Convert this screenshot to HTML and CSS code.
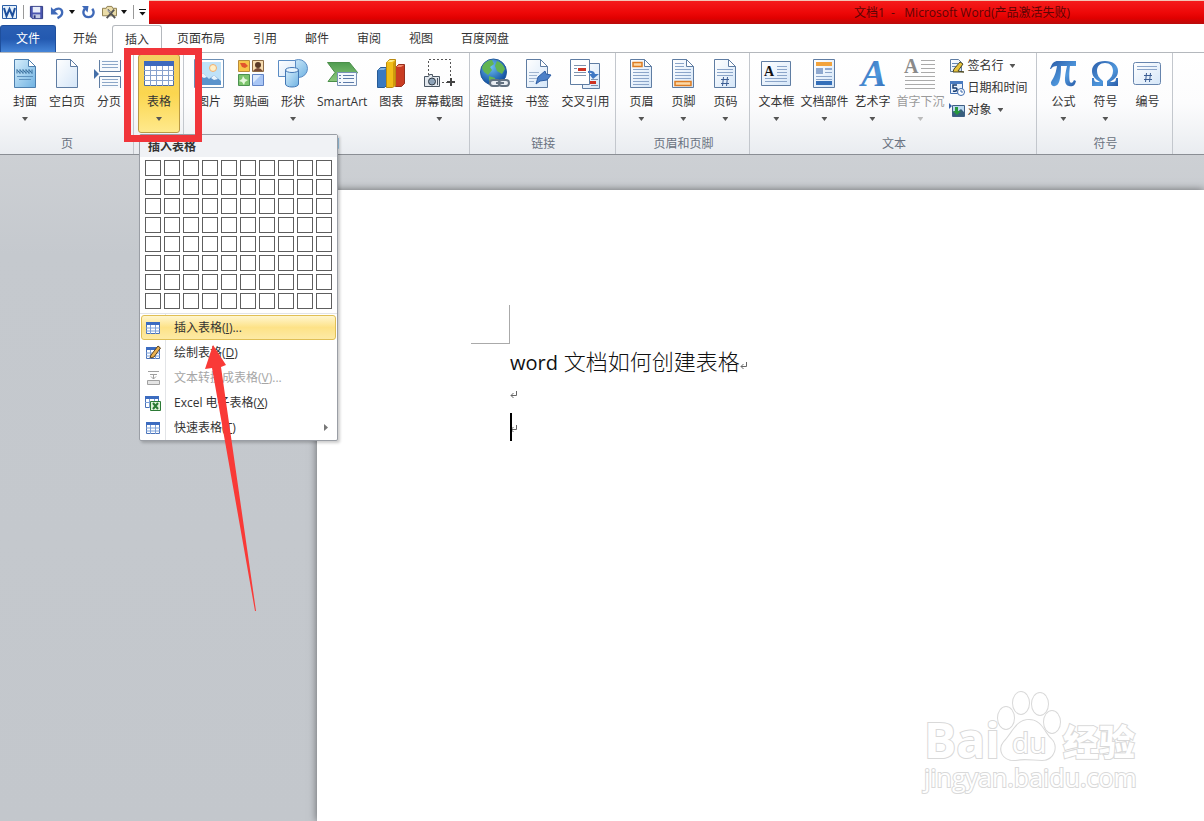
FILE: index.html
```
<!DOCTYPE html>
<html lang="zh-CN">
<head>
    <meta charset="UTF-8">
    <meta name="viewport" content="width=device-width, initial-scale=1.0">
    <title>文档1 - Microsoft Word</title>
    <link rel="stylesheet" href="styles.css">
</head>
<body>
    <svg class="defs" width="0" height="0" aria-hidden="true">
        <defs>
            <linearGradient id="paper" x1="0" y1="0" x2="1" y2="1"><stop offset="0" stop-color="#fff"/><stop offset="1" stop-color="#d5e6f8"/></linearGradient>
            <linearGradient id="sky" x1="0" y1="0" x2="1" y2="1"><stop offset="0" stop-color="#d8effc"/><stop offset="1" stop-color="#6fb2e2"/></linearGradient>
            <linearGradient id="blue" x1="0" y1="0" x2="1" y2="1"><stop offset="0" stop-color="#2a5ca8"/><stop offset="0.6" stop-color="#4f97dc"/><stop offset="1" stop-color="#2a5ca8"/></linearGradient>
            <linearGradient id="green" x1="0" y1="0" x2="0" y2="1"><stop offset="0" stop-color="#4f9c50"/><stop offset="1" stop-color="#8cc97c"/></linearGradient>
            <radialGradient id="globe" cx="0.4" cy="0.3" r="0.7"><stop offset="0" stop-color="#6fc0f4"/><stop offset="1" stop-color="#0c4a9c"/></radialGradient>
            <symbol id="table" viewBox="0 0 16 16">
                <path fill="#fff" stroke="#4a72b8" d="M1.500 2.500h13v11h-13z"/>
                <path fill="#3c6cc0" d="M1 2h14v3H1z"/>
                <path stroke="#7ba0d8" d="M1 8h14M1 11h14M5.500 5v9M10.500 5v9"/>
            </symbol>
            <symbol id="return" viewBox="0 0 8 8">
                <path fill="none" stroke="#666" d="M6.500 0v4.500H1M3.500 2L1 4.500L3.500 7"/>
            </symbol>
        </defs>
    </svg>

    <header class="titlebar">
        <div class="quick">
            <svg class="i16" viewBox="0 0 16 16"><path fill="#e6f1fb" stroke="#2d5fa6" d="M1.500 1.500h14v13h-14z"/><path fill="none" stroke="#1d4f9c" stroke-width="2" d="M3 4l2.500 8L8.500 5l3 7L14 4"/></svg>
            <i class="sep"></i>
            <button class="q" aria-label="保存"><svg class="i16" viewBox="0 0 16 16"><path fill="#4a56b0" stroke="#2c3680" d="M1.500 1.500h13v13h-11l-2-2z"/><path fill="#e8edf9" d="M4 2h8v6H4z"/><path fill="#c4cce4" d="M4 10h8v4H4z"/><path fill="#2c3680" d="M5 11h2v3H5z"/></svg></button>
            <button class="q" aria-label="撤消"><svg class="i16" viewBox="0 0 16 16"><path fill="none" stroke="#3f69b8" stroke-width="2.500" d="M4 6c5-4 9-2 9 2 0 3-3 5-5 6"/><path fill="#3f69b8" d="M1 2v8h8z"/></svg><i class="caret dark"></i></button>
            <button class="q" aria-label="重复"><svg class="i16" viewBox="0 0 16 16"><path fill="none" stroke="#3f69b8" stroke-width="2.500" d="M4 4C1 8 3 13 8 13s7-5 4-9"/><path fill="#3f69b8" d="M8 1h-7l6 7z"/></svg></button>
            <button class="q" aria-label="工具"><svg class="i16" viewBox="0 0 16 16"><path fill="#eadca8" stroke="#8b7b4c" d="M.5 3.500h4l1-2h5l1 2h4v8H.5z"/><path stroke="#555" stroke-width="2" d="M6 5l8 9M13 5L5 14"/><path stroke="#ddd" d="M5 5l4 3"/></svg><i class="caret dark"></i></button>
            <i class="sep"></i>
            <button class="q custom" aria-label="自定义快速访问工具栏"><i class="caret dark"></i></button>
        </div>
        <div class="caption">文档1&nbsp; -&nbsp;&nbsp; Microsoft Word(产品激活失败)</div>
    </header>

    <nav class="tabs">
        <button class="file">文件</button>
        <button>开始</button>
        <button class="active">插入</button>
        <button>页面布局</button>
        <button>引用</button>
        <button>邮件</button>
        <button>审阅</button>
        <button>视图</button>
        <button>百度网盘</button>
    </nav>

    <div class="ribbon">
        <section class="group">
            <div class="tools">
                <button class="tool"><svg viewBox="0 0 32 32"><path fill="url(#sky)" stroke="#4d7fae" d="M5.500 1.500h14l7 7v21h-21z"/><path fill="#fff" stroke="#4d7fae" d="M19.500 1.500v7h7z"/><path fill="none" stroke="#39709f" d="M8 15.500v-4l3 4v-4l3 4v-4l3 4v-4l3 4v-4l3 4v-4"/><path stroke="#5e93bf" d="M8 18.500h16M10 21.500h12"/></svg>封面<i class="caret"></i></button>
                <button class="tool"><svg viewBox="0 0 32 32"><path fill="url(#paper)" stroke="#5f7da3" d="M5.500 1.500h14l7 7v21h-21z"/><path fill="#fff" stroke="#5f7da3" d="M19.500 1.500v7h7z"/></svg>空白页</button>
                <button class="tool"><svg viewBox="0 0 32 32"><path fill="#f7fafd" d="M7 2h20v11H7zM7 19h20v11H7z"/><path fill="none" stroke="#5f7da3" d="M6.500 2v11.500h21V2M6.500 30V18.500h21V30"/><path stroke="#8ca7c8" d="M9 3.500h16M9 6.500h16M9 9.500h16M9 21.500h16M9 24.500h16M9 27.500h16"/><path fill="#456fa8" d="M1 11l5 5-5 5z"/></svg>分页</button>
            </div>
            <h2>页</h2>
        </section>

        <section class="group">
            <div class="tools table-tool">
                <button class="tool pressed"><svg viewBox="0 0 32 32"><path fill="#fff" stroke="#4f6ea5" d="M1.500 3.500h29v24h-29z"/><path fill="#3d69bd" d="M1 3h30v5H1z"/><path stroke="#87a1cd" d="M1 12.500h30M1 17.500h30M1 22.500h30M7.500 8v20M13.500 8v20M19.500 8v20M25.500 8v20"/></svg>表格<i class="caret"></i></button>
                <div class="menu">
                    <h3>插入表格</h3>
                    <div class="cells" id="cells"></div>
                    <div class="items">
                        <button class="hot"><svg class="i16"><use href="#table"/></svg><span>插入表格(<u>I</u>)...</span></button>
                        <button><svg class="i16" viewBox="0 0 16 16"><use href="#table"/><path fill="#e9b04e" stroke="#5b4322" d="M6 10l7-9 2.500 2L9 12l-4 1z"/></svg><span>绘制表格(<u>D</u>)</span></button>
                        <button disabled><svg class="i16" viewBox="0 0 16 16"><path fill="#e4e4e4" stroke="#a0a0a0" d="M2.500 10.500h12v4h-12z"/><path fill="none" stroke="#a0a0a0" d="M3 1.500h11M5 4.500h7M8.500 4v5M6 6.500l2.500 2.500L11 6.500"/></svg><span>文本转换成表格(<u>V</u>)...</span></button>
                        <button><svg class="i16" viewBox="0 0 16 16"><path fill="#fff" stroke="#4a72b8" d="M.5 1.500h13v11H.5z"/><path fill="#3c6cc0" d="M0 1h14v3H0z"/><path stroke="#7ba0d8" d="M0 7.500h14M4.500 4v9M9.500 4v9"/><path fill="#dff2dc" stroke="#2b7a35" d="M5.500 6.500h10v9h-10z"/><path stroke="#2b7a35" stroke-width="2" d="M8 8l5 6M13 8l-5 6"/></svg><span>Excel 电子表格(<u>X</u>)</span></button>
                        <button><svg class="i16"><use href="#table"/></svg><span>快速表格(<u>T</u>)</span><i class="more"></i></button>
                    </div>
                </div>
                <div class="mark"></div>
                <svg class="arrow" viewBox="0 0 52 266"><path fill="#f93a37" d="M9 0L1 24l7-1 43 243h1L17 22l5-2z"/></svg>
            </div>
            <h2>表格</h2>
        </section>

        <section class="group">
            <div class="tools">
                <button class="tool"><svg viewBox="0 0 32 32"><path fill="#fff" stroke="#6d8fb5" d="M1.500 1.500h29v28h-29z"/><path fill="#bfe2f8" d="M4 4h24v23H4z"/><circle cx="20" cy="10" r="3.500" fill="#fff0c8" stroke="#f0b070"/><path fill="#5b93cc" d="M4 27v-7l6-5 6 6 5-4 7 6v4z"/><path fill="#e8f3fb" d="M7 18l3-3 4 4-3 1zM18 20l3-3 4 4-4 1z"/></svg>图片</button>
                <button class="tool"><svg viewBox="0 0 32 32"><path fill="#f7c548" stroke="#b98a3a" d="M3.500 2.500h11v11h-11z"/><path fill="#e2552c" d="M5 5h5l3 3-3 2-3-1z"/><path fill="#f7dcb0" stroke="#8d6a45" d="M17.500 2.500h11v11h-11z"/><circle cx="23" cy="7" r="3" fill="#5b3926"/><path fill="#7a4b37" d="M18 13q5-6 10 0z"/><path fill="#7cc46c" stroke="#4b9150" d="M3.500 16.500h11v11h-11z"/><path fill="#e4f7dc" d="M8 18l2 3 3 1-3 2-1 3-2-3-3-1 3-2z"/><path fill="#a9c6f5" stroke="#6183c5" d="M17.500 16.500h11v11h-11z"/><path fill="#dce9fc" d="M18 17h8l-8 8z"/></svg>剪贴画</button>
                <button class="tool"><svg viewBox="0 0 32 32"><circle cx="21.500" cy="10.500" r="9" fill="url(#sky)" stroke="#5b8cc4"/><path fill="url(#paper)" stroke="#5b8cc4" d="M1.500 2.500h17v16h-17z"/><path fill="url(#sky)" stroke="#4478b5" d="M8.500 12v14c0 4 13 4 13 0V12z"/><ellipse cx="15" cy="12" rx="6.500" ry="2.500" fill="#e8f5fe" stroke="#4478b5"/></svg>形状<i class="caret"></i></button>
                <button class="tool"><svg viewBox="0 0 32 32"><path fill="url(#green)" stroke="#4b8f4a" d="M1.500 4.500h22l8 10-7 9H2l7-9z"/><path fill="#f4f8fd" stroke="#7891b5" d="M11.500 14.500h19v13h-19z"/><path stroke="#5d7ba9" d="M17 17.500h11M17 20.500h11M17 24.500h11M13 17.500h2M13 20.500h2M13 24.500h2"/></svg>SmartArt</button>
                <button class="tool"><svg viewBox="0 0 32 32"><path fill="#3a79c0" stroke="#265a96" d="M2.500 12.500l3-3h6v18l-2 2h-7z"/><path fill="#7fb2e4" d="M3 12l3-2h5l-2 2z"/><path fill="#c93c22" stroke="#96301f" d="M20.500 9.500l3-3h6v19l-3 3h-6z"/><path fill="#f08a6c" d="M21 9l3-2h5l-3 2z"/><path fill="#f1bd17" stroke="#b98a10" d="M11.500 4.500l3-3h6v26l-3 2h-6z"/><path fill="#fdea86" d="M12 4l3-2h5l-3 2z"/><path fill="#d09a0c" d="M18 5l2-2v24l-2 2z"/></svg>图表</button>
                <button class="tool"><svg viewBox="0 0 32 32"><path fill="none" stroke="#555" stroke-dasharray="2 2" d="M5.500 17V1.500h22V20M19 24.500h6"/><path stroke="#444" stroke-width="2" d="M28 20v8M24 24h8"/><path fill="#e2e7ed" stroke="#4a5663" d="M1.500 18.500h4l1-2h3v2h7v10h-15z"/><circle cx="9" cy="23.500" r="3.500" fill="#8fa3b8" stroke="#2f3a45"/><path stroke="#4a5663" d="M14.500 20v7"/></svg>屏幕截图<i class="caret"></i></button>
            </div>
            <h2>插图</h2>
        </section>

        <section class="group">
            <div class="tools">
                <button class="tool"><svg viewBox="0 0 32 32"><circle cx="14.500" cy="14" r="13" fill="url(#globe)" stroke="#235a9c"/><path fill="#62b552" d="M4 7q4-5 9-5l2 4-4 3 2 3-4 5-4-3-2-4zM18 3q6 2 8 8l-3 5-5-3-2-5zM10 18l6 2 1 5-3 2q-5-3-4-9z"/><g fill="none" stroke-width="2" stroke="#637180"><rect x="11" y="22" width="10" height="6" rx="3" fill="#e9edf2"/><rect x="20" y="22" width="10" height="6" rx="3" fill="#e9edf2"/><path d="M17 25h8"/></g></svg>超链接</button>
                <button class="tool"><svg viewBox="0 0 32 32"><path fill="url(#paper)" stroke="#5f7da3" d="M5.500 1.500h14l7 7v21h-21z"/><path fill="#fff" stroke="#5f7da3" d="M19.500 1.500v7h7z"/><path stroke="#9fb4cf" d="M8 14.500h10M8 17.500h8M8 20.500h8M8 23.500h5"/><path fill="#4c80c8" stroke="#2e5ea5" d="M17 19l7-6 1 3 5 1-4 5-7 1-4 3z"/></svg>书签</button>
                <button class="tool"><svg viewBox="0 0 32 32"><path fill="url(#paper)" stroke="#5f7da3" d="M13.500 5.500h17v25h-17z"/><path fill="#fff" stroke="#5f7da3" d="M1.500 1.500h19v25h-19z"/><path stroke="#7f93ae" d="M5 7.500h12M5 10.500h3M5 14.500h12M5 17.500h12M22 21.500h7M22 27.500h7"/><path fill="#cf3222" d="M9 10h8v3H9zM21 23h6v3h-6z"/><path fill="#3f78c4" d="M19 13q6-1 7 3h4l-6 5-4-5h3q-1-2-4-1z"/></svg>交叉引用</button>
            </div>
            <h2>链接</h2>
        </section>

        <section class="group">
            <div class="tools">
                <button class="tool"><svg viewBox="0 0 32 32"><path fill="url(#paper)" stroke="#5f7da3" d="M5.500 1.500h14l7 7v21h-21z"/><path fill="#fff" stroke="#5f7da3" d="M19.500 1.500v7h7z"/><path fill="#fbd9a8" stroke="#dd7c22" stroke-width="1.500" d="M8 4.500h9v4H8z"/><path stroke="#8ba5c9" d="M8 11.500h16M8 14.500h16M8 17.500h16M8 20.500h16M8 23.500h16M8 26.500h16"/></svg>页眉<i class="caret"></i></button>
                <button class="tool"><svg viewBox="0 0 32 32"><path fill="url(#paper)" stroke="#5f7da3" d="M5.500 1.500h14l7 7v21h-21z"/><path fill="#fff" stroke="#5f7da3" d="M19.500 1.500v7h7z"/><path stroke="#8ba5c9" d="M8 5.500h9M8 8.500h9M8 11.500h16M8 14.500h16M8 17.500h16M8 20.500h16"/><path fill="#fbd9a8" stroke="#dd7c22" stroke-width="1.500" d="M8 23.500h16v4H8z"/></svg>页脚<i class="caret"></i></button>
                <button class="tool"><svg viewBox="0 0 32 32"><path fill="url(#paper)" stroke="#5f7da3" d="M5.500 1.500h14l7 7v21h-21z"/><path fill="#fff" stroke="#5f7da3" d="M19.500 1.500v7h7z"/><path stroke="#8ba5c9" d="M8 11.500h16M8 14.500h16M8 17.500h16"/><path stroke="#3c5e94" d="M14.500 19l-1 9M18.500 19l-1 9M12 21.500h8M12 25.500h8"/></svg>页码<i class="caret"></i></button>
            </div>
            <h2>页眉和页脚</h2>
        </section>

        <section class="group wide">
            <div class="tools">
                <button class="tool"><svg viewBox="0 0 32 32"><path fill="url(#paper)" stroke="#5f7da3" d="M1.500 3.500h29v24h-29z"/><text x="4" y="18" class="serif" font-size="14" fill="#111">A</text><path stroke="#8ba5c9" d="M17 8.500h10M17 11.500h10M17 14.500h10M17 17.500h10M5 20.500h22M5 23.500h22"/></svg>文本框<i class="caret"></i></button>
                <button class="tool"><svg viewBox="0 0 32 32"><path fill="url(#paper)" stroke="#5f7da3" d="M5.500 1.500h21v28h-21z"/><path fill="#f2a33c" d="M8 4h16v4H8z"/><path fill="#8fa9cf" d="M8 10h7v6H8zM17 10h7v2h-7z"/><path stroke="#8ba5c9" d="M17 14.500h7M8 18.500h16M8 21.500h16"/><path fill="#346fb9" d="M8 23h16v4H8z"/></svg>文档部件<i class="caret"></i></button>
                <button class="tool"><svg viewBox="0 0 32 32"><text x="5" y="28" class="serif slant" font-size="38" fill="url(#blue)">A</text></svg>艺术字<i class="caret"></i></button>
                <button class="tool" disabled><svg viewBox="0 0 32 32"><text x="0" y="15" class="serif" font-size="20" fill="#8a8a8a">A</text><path stroke="#aaa" d="M17 2.500h14M17 6.500h14M17 10.500h14M17 14.500h14M1 18.500h30M1 22.500h30M1 26.500h30M1 30.500h30"/></svg>首字下沉<i class="caret"></i></button>
                <div class="stack">
                    <button><svg class="i16" viewBox="0 0 16 16"><path fill="url(#paper)" stroke="#5f7da3" d="M1.500 1.500h8l3 3v9h-11z"/><path stroke="#6688b5" d="M3 5.500h6M3 8.500h5"/><path fill="#e8c43c" stroke="#4d4823" d="M5 11l6-7 3 2-5 7 6 1H4z"/></svg>签名行<i class="caret"></i></button>
                    <button><svg class="i16" viewBox="0 0 16 16"><path fill="#e9f1fb" stroke="#3f6cae" d="M1.500 1.500h12v12h-12z"/><path fill="#4a7bc0" d="M1 1h13v3H1z"/><path fill="none" stroke="#183c70" stroke-width="1.500" d="M8 5H4v3h3c2 1 1 4-3 3"/><circle cx="12" cy="12" r="3.500" fill="#fff" stroke="#3f6cae"/><path fill="none" stroke="#3f6cae" d="M12 10v2h2"/></svg>日期和时间</button>
                    <button><svg class="i16" viewBox="0 0 16 16"><path fill="#bcd9f0" stroke="#3f5f86" d="M3.500 3.500h12v11h-12z"/><path fill="#375e7d" d="M4 14V9l3 2 5-4 3 3v4z"/><path fill="#27983c" d="M6 5h3v4h3l-4 4-4-4h2z"/><path fill="#315fa8" d="M0 1l3 3-3 3z"/></svg>对象<i class="caret"></i></button>
                </div>
            </div>
            <h2>文本</h2>
        </section>

        <section class="group wide">
            <div class="tools">
                <button class="tool"><svg viewBox="0 0 32 32"><path fill="url(#blue)" d="M3 11C5 5 7 3 11 3h18v5h-6c-1 7-1 14 0 16 2 2 3 0 4-2l2 1c-1 5-4 6-7 5-5-1-5-7-2-20h-6c0 9-1 15-3 18-2 3-7 3-7-1 0-3 4-4 6-17-3 0-5 1-6 3z"/></svg>公式<i class="caret"></i></button>
                <button class="tool"><svg viewBox="0 0 32 32"><path fill="url(#blue)" d="M3 28v-8h2c0 3 1 4 3 4h3C6 21 3 18 3 13 3 7 8 3 16 3s13 4 13 10c0 5-3 8-8 11h3c2 0 3-1 3-4h2v8H18v-5c4-3 6-6 6-10 0-5-3-8-8-8s-8 3-8 8c0 4 2 7 6 10v5z"/></svg>符号<i class="caret"></i></button>
                <button class="tool"><svg viewBox="0 0 32 32"><rect x="2.500" y="4.500" width="27" height="22" rx="2" fill="url(#paper)" stroke="#6684ad"/><path stroke="#8ba5c9" d="M6 8.500h20M6 11.500h20"/><path stroke="#3c5e94" d="M15.500 15l-1 9M19.500 15l-1 9M13 17.500h8M13 21.500h8"/></svg>编号</button>
            </div>
            <h2>符号</h2>
        </section>
    </div>

    <main class="workspace">
        <article class="page">
            <div class="corner"></div>
            <p class="heading"><b>word</b> 文档如何创建表格<svg class="ret"><use href="#return"/></svg></p>
            <p><svg class="ret"><use href="#return"/></svg></p>
            <p class="cursor"><svg class="ret"><use href="#return"/></svg></p>
        </article>
        <svg class="watermark" viewBox="0 0 224 108">
            <text x="6" y="71" class="bai">Bai</text>
            <g class="paw">
                <ellipse cx="88" cy="31" rx="8" ry="11"/>
                <ellipse cx="103" cy="16" rx="8" ry="11"/>
                <ellipse cx="122" cy="17" rx="8" ry="11"/>
                <ellipse cx="134" cy="35" rx="8" ry="11"/>
                <path d="M111 33c13 0 15 13 22 19s4 21-9 21c-8 0-18-2-26 0-14 1-18-11-12-18 8-8 12-22 25-22z"/>
            </g>
            <text x="94" y="66" class="du">du</text>
            <text x="145" y="69" class="jy">经验</text>
            <text x="6" y="100" class="url">jingyan.baidu.com</text>
        </svg>
    </main>

    <script>
        // 10 x 8 table size picker
        const cells = document.getElementById('cells');
        for (let i = 0; i < 80; i++) {
            const cell = document.createElement('button');
            cell.setAttribute('aria-label', `${i % 10 + 1} x ${Math.floor(i / 10) + 1}`);
            cells.appendChild(cell);
        }
    </script>
</body>
</html>
```
FILE: styles.css
```
* {
    box-sizing: border-box;
}
body {
    margin: 0;
    min-height: 100vh;
    display: flex;
    flex-direction: column;
    font-family: "Open Sans", "Noto Sans CJK SC", sans-serif;
    font-size: 12px;
    line-height: 16px;
    color: #333;
    background-color: #fff;
    overflow-x: hidden;
}
button {
    font: inherit;
    color: inherit;
    background: none;
    border: none;
    padding: 0;
    margin: 0;
    white-space: nowrap;
}
h2, h3, p {
    margin: 0;
}
.defs {
    position: absolute;
}
.i16 {
    width: 16px;
    height: 16px;
    flex: none;
}
.caret {
    width: 6px;
    height: 4px;
    background-color: #555;
    clip-path: polygon(0 0, 100% 0, 50% 100%);
}
.caret.dark {
    background-color: #111;
}

/* title bar */
.titlebar {
    display: flex;
    height: 24px;
}
.quick {
    width: 149px;
    display: flex;
    align-items: center;
    gap: 6px;
    padding-left: 1px;
}
.quick .sep {
    width: 1px;
    height: 14px;
    background-color: #999;
    margin-right: -1px;
}
.q {
    display: flex;
    align-items: center;
    gap: 4px;
}
.q .i16 {
    width: 15px;
    height: 15px;
}
.custom {
    border-top: 1px solid #111;
    padding-top: 2px;
}
.custom .caret {
    width: 7px;
    height: 4px;
}
.caption {
    flex: 1;
    padding: 4px 134px 0 0;
    text-align: right;
    color: #5c0505;
    border-top: 1px solid #f3c5b5;
    background: linear-gradient(#f41c1c, #ee0808 50%, #e00000 75%, #b80c0c);
}

/* tabs */
.tabs {
    display: flex;
    height: 29px;
    padding-top: 1px;
    border-bottom: 1px solid #b4b8bd;
}
.tabs button {
    padding: 0 14px;
}
.tabs .file {
    width: 56px;
    margin-right: 3px;
    color: #fff;
    border: 1px solid #1f4f9c;
    border-bottom: none;
    border-radius: 3px 3px 0 0;
    background: linear-gradient(#2a5fb4, #2359b0 50%, #4585d8);
}
.tabs .active {
    margin: 0 1px -1px;
    padding: 0 12px;
    border: 1px solid #b4b8bd;
    border-bottom: none;
    border-radius: 3px 3px 0 0;
    background-color: #fff;
}

/* ribbon */
.ribbon {
    display: flex;
    height: 102px;
    border-bottom: 1px solid #8a8e94;
    background: linear-gradient(#fff, #fcfcfd 50%, #e9ecf0);
}
.group {
    display: flex;
    flex-direction: column;
    padding: 1px 3px 0 4px;
    border-right: 1px solid #c3c7cd;
}
.group.wide {
    padding: 1px 4px 0 5px;
}
.group h2 {
    margin-top: 3px;
    font-size: 12px;
    font-weight: normal;
    text-align: center;
    color: #6a7280;
}
.tools {
    display: flex;
    height: 79px;
}
.tool {
    min-width: 42px;
    padding: 4px 3px 0;
    display: flex;
    flex-direction: column;
    align-items: center;
    line-height: 16px;
}
.tool svg {
    width: 32px;
    height: 32px;
    margin-bottom: 4px;
    overflow: visible;
}
.tool .caret {
    margin-top: 7px;
}
.tool:disabled {
    color: #9a9a9a;
}
.tool:disabled .caret {
    background-color: #bbb;
}
.serif {
    font-family: "Liberation Serif", serif;
    font-weight: bold;
}
.slant {
    font-style: italic;
}
.stack {
    width: 85px;
    display: flex;
    flex-direction: column;
    padding: 1px 0 0 2px;
}
.stack button {
    display: flex;
    align-items: center;
    gap: 2px;
    height: 22px;
}
.stack .caret {
    margin-left: 4px;
}
.table-tool {
    position: relative;
}
.pressed {
    padding-top: 3px;
    border: 1px solid #b99a45;
    border-radius: 3px;
    background: linear-gradient(#f3cf63, #fbd64f 50%, #ffe98c);
}

/* table menu */
.menu {
    position: absolute;
    left: 1px;
    top: 80px;
    z-index: 2;
    width: 199px;
    border: 1px solid #9a9ea5;
    border-radius: 2px;
    background-color: #fff;
    box-shadow: 2px 2px 3px rgba(0, 0, 0, 0.2);
}
.menu h3 {
    height: 22px;
    padding: 4px 8px 2px;
    font-size: 12px;
    font-weight: bold;
    background-color: #f0f2f5;
}
.cells {
    display: grid;
    grid-template-columns: repeat(10, 16px);
    gap: 3px;
    padding: 3px 5px 4px;
    border-bottom: 1px solid #e2e4e7;
}
.cells button {
    height: 16px;
    border: 1px solid #5e5e5e;
}
.items {
    padding: 1px 1px 0;
    background: linear-gradient(#e2e4e7, #e2e4e7) 25px 0 / 1px 100% no-repeat;
}
.items button {
    display: flex;
    align-items: center;
    gap: 13px;
    width: 100%;
    height: 25px;
    padding: 0 8px 0 4px;
}
.items .hot {
    padding: 0 7px 0 3px;
    border: 1px solid #e0bf55;
    border-radius: 3px;
    background: linear-gradient(#fff6cf, #fde287 50%, #fdeaa5);
}
.items button:disabled {
    color: #a6a6a6;
}
.more {
    margin-left: auto;
    width: 4px;
    height: 7px;
    background-color: #777;
    clip-path: polygon(0 0, 100% 50%, 0 100%);
}

/* annotations */
.mark {
    position: absolute;
    left: -14px;
    top: -6px;
    z-index: 3;
    width: 78px;
    height: 94px;
    border: 7px solid #f1353a;
    pointer-events: none;
}
.arrow {
    position: absolute;
    left: 66px;
    top: 291px;
    z-index: 3;
    width: 52px;
    height: 266px;
    pointer-events: none;
}

/* document */
.workspace {
    position: relative;
    flex: 1;
    display: flex;
    padding: 35px 0 0 317px;
    background: linear-gradient(#cdd0d4, #c5c9ce 100px, #c3c7cc);
}
.page {
    flex: 1;
    padding: 115px 40px 0 154px;
    background-color: #fff;
    box-shadow: 0 0 8px rgba(0, 0, 0, 0.5);
}
.corner {
    width: 39px;
    height: 39px;
    border-right: 1px solid #aaa;
    border-bottom: 1px solid #aaa;
}
.page p {
    margin-left: 39px;
    height: 34px;
    line-height: 34px;
    color: #111;
}
.page .heading {
    font-size: 22px;
    font-weight: 300;
}
.heading b {
    font-size: 20px;
    font-weight: 500;
}
.ret {
    width: 8px;
    height: 8px;
}
.cursor {
    position: relative;
}
.cursor::before {
    content: "";
    position: absolute;
    left: 0;
    top: 1px;
    width: 2px;
    height: 28px;
    background-color: #000;
}
.watermark {
    position: absolute;
    right: 62px;
    bottom: 26px;
    width: 224px;
    height: 108px;
}
.watermark text, .paw {
    fill: #fff;
    stroke: #d9d9d9;
    stroke-width: 2px;
    paint-order: stroke;
    font-weight: bold;
}
.watermark .bai {
    font-size: 48px;
}
.watermark .du {
    font-size: 28px;
    font-weight: 500;
}
.watermark .jy {
    font-size: 36px;
    font-weight: 900;
}
.watermark .url {
    font-size: 25px;
    font-weight: 500;
}
```
